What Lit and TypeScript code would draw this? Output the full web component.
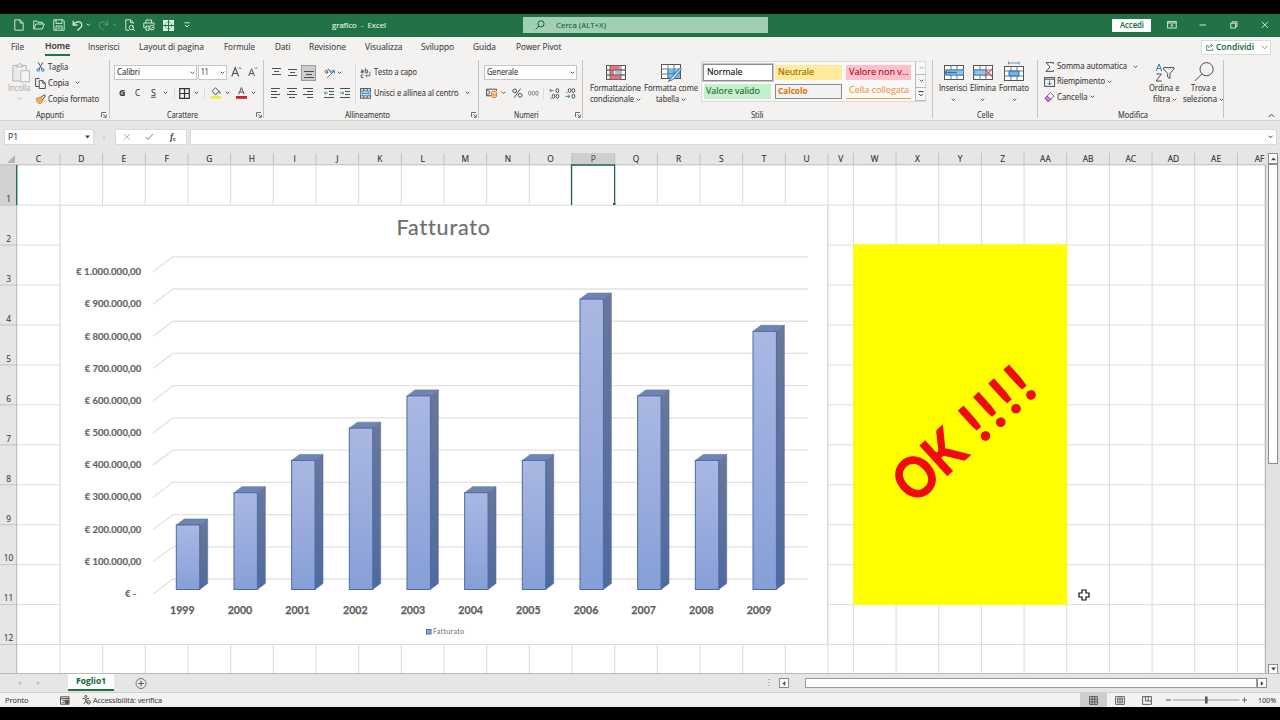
import { LitElement, html, svg, css } from "lit";
import { customElement } from "lit/decorators.js";

const COL_W = 42.67;
const COLUMNS = ["C","D","E","F","G","H","I","J","K","L","M","N","O","P","Q","R","S","T","U","V","W","X","Y","Z","AA","AB","AC","AD","AE","AF"];
const ROW_H = 39.95;
const DATA = [
  { year: 1999, value: 2 }, { year: 2000, value: 3 }, { year: 2001, value: 4 }, { year: 2002, value: 5 },
  { year: 2003, value: 6 }, { year: 2004, value: 3 }, { year: 2005, value: 4 }, { year: 2006, value: 9 },
  { year: 2007, value: 6 }, { year: 2008, value: 4 }, { year: 2009, value: 8 },
];

/* Label set to an exact width in px. */
const t = (s: string, w: number, size = 8.1, cls = "") => html`<svg class="t ${cls}" width=${w} height="11"><text x="0" y="7.8" font-size=${size} textLength=${w} lengthAdjust="spacingAndGlyphs">${s}</text></svg>`;
const ic = (w: number, h: number, body: unknown, cls = "") => html`<svg class="i ${cls}" width=${w} height=${h} viewBox="0 0 ${w} ${h}">${body}</svg>`;
const caret = (cls = "") => ic(5, 4, svg`<path d="M.7 .7 2.5 2.5 4.3 .7"/>`, "caret " + cls);
const launcher = ic(6, 6, svg`<path d="M.5 5V.5H5M2.2 2.2 5 5M5.3 2.6V5.3H2.6" stroke-width=".8"/>`);

const lines = (xs: number[][]) => svg`<path d=${xs.map(([x1, x2], i) => `M${x1} ${i * 3 + 0.5}H${x2}`).join("")} />`;
const hAlign = (xs: number[][]) => ic(11, 10, lines(xs));

const table3 = svg`<rect x=".5" y=".5" width="19" height="14" fill="#fff" stroke="#555"/><path d="M.5 5H19.5M.5 10H19.5M7 .5V14.5M13 .5V14.5" stroke="#777"/>`;

@customElement("x-chart")
export class XChart extends LitElement {
  static styles = css`
    :host { display: block; }
    svg { display: block; font-family: Lato, sans-serif; font-variant-ligatures: none; }
    .grid { stroke: #e2e2e2; fill: none; stroke-width: 1.3; }
    .val { fill: #666; font-weight: 700; font-size: 9.6px; stroke: #666; stroke-width: .2px; }
    .year { fill: #606060; font-weight: 700; font-size: 11.4px; stroke: #606060; stroke-width: .25px; }
    .title { fill: #707070; font-size: 21.5px; stroke: #707070; stroke-width: .25px; }
    .legend { fill: #6b6b6b; font-size: 7px; }
    .front { fill: url(#f); stroke: #4a6aa8; stroke-width: 1; }
    .side { fill: url(#s); stroke: #52699a; stroke-width: .5; }
    .top { fill: #7084b2; stroke: #5a76ab; stroke-width: .6; }
  `;
  render() {
    const step = 32.22;
    return html`<svg width="768" height="440" viewBox="60 205 768 440">
      <defs>
        <linearGradient id="f" x1="0" y1="0" x2="0" y2="1"><stop offset="0" stop-color="#a9b8e2"/><stop offset=".5" stop-color="#9aacdd"/><stop offset="1" stop-color="#869fd8"/></linearGradient>
        <linearGradient id="s" x1="0" y1="0" x2="0" y2="1"><stop offset="0" stop-color="#69779a"/><stop offset="1" stop-color="#506a9e"/></linearGradient>
      </defs>
      <rect x="60" y="205" width="768" height="440" fill="#fff"/>
      <path d="M59.5 205.2H827.5V644.6H60.2V205" fill="none" stroke="#dadada"/>
      <text class="title" x="396.5" y="235.3" textLength="93.5">Fatturato</text>
      ${Array.from({ length: 11 }, (_, k) => {
        const y = 579 - k * step;
        const label = k === 0 ? "€ -" : k === 10 ? "€ 1.000.000,00" : `€ ${k}00.000,00`;
        const w = k === 0 ? 11 : k === 10 ? 65 : 56.5;
        const right = k === 0 ? 136.3 : 141.2;
        return svg`<path class="grid" d="M153 ${y + 15}L173 ${y}H808"/>
          <text class="val" x=${right - w} y=${597 - k * 32.18} textLength=${w} lengthAdjust="spacingAndGlyphs">${label}</text>`;
      })}
      ${DATA.map((d, i) => {
        const x = 176.3 + i * 57.67;
        const y = 589.5 - d.value * 32.27;
        return svg`<path class="side" d="M${x + 23.4} ${y}l8 -6V583.5l-8 6Z"/>
          <path class="top" d="M${x} ${y}l8 -6h23.4l-8 6Z"/>
          <rect class="front" x=${x} y=${y} width="23.4" height=${589.5 - y}/>
          <text class="year" x=${170 + i * 57.67} y="613.7" textLength="24.6" lengthAdjust="spacingAndGlyphs">${d.year}</text>`;
      })}
      <rect x="426.5" y="629.5" width="4.5" height="4.5" fill="#8ea6d8" stroke="#4a6fb0"/>
      <text class="legend" x="433" y="633.8" textLength="31">Fatturato</text>
    </svg>`;
  }
}

@customElement("app-root")
export class AppRoot extends LitElement {
  static styles = css`
    :host { display: block; width: 1280px; height: 720px; background: #000; overflow: hidden; font-family: "Open Sans", "Noto Sans", sans-serif; color: #3b3b3b; }
    * { box-sizing: border-box; }
    .app { display: grid; grid-template-rows: 23px 20px 64px 32px 520px 19px 15px; width: 1280px; padding-top: 14px; }
    svg { display: block; overflow: visible; flex: none; }
    .t { fill: currentColor; stroke: none; }
    .t text { stroke: currentColor; stroke-width: .12px; }
    .i { fill: none; stroke: #505050; stroke-width: 1; }
    .caret { stroke: #555; }
    .bold { font-weight: 700; }
    .semi { font-weight: 600; }
    .calibri { font-family: "Open Sans", sans-serif; }
    .under { text-decoration: underline; }
    .muted { color: #b3b1af; }
    .muted-i { stroke: #b8b6b4; }
    .row { display: grid; align-items: center; }
    .off { opacity: .35; }

    .title { background: #217346; color: #e6f2ea; grid-template-columns: 19px 20px 19px 14px 12px 14px 13px 18px 20px 21px 148px 191px 589px 55px 32px 31px 31px 10px; padding-left: 14px; border-bottom: 1px solid #1d6a40; }
    .title .i { stroke: #cbe8d6; }
    .title .search { width: 245px; height: 16px; background: #a0cfb2; display: grid; grid-template-columns: 21px 1fr; align-items: center; padding-left: 12px; color: #1f5f3c; }
    .title .search .i { stroke: #1f5f3c; }
    .login { width: 39px; height: 13px; background: #fff; color: #217346; display: grid; place-items: center; }

    .tabs { background: #f3f2f1; grid-template-columns: 34px 43px 51px 85px 51px 34px 56px 56px 52px 43px 685px 1fr; padding-left: 11px; color: #444; }
    .home { border-bottom: 2px solid #217346; height: 18px; display: grid; align-content: center; width: 25px; color: #333; padding-top: 1px; }
    .share { width: 70px; height: 15px; border: 1px solid #d9d9d9; background: #fff; display: grid; grid-template-columns: 10px 45px 1fr; align-items: center; padding-left: 4px; color: #217346; }
    .share .t { color: #1f6b43; }

    .ribbon { background: #f3f2f1; display: flex; border-bottom: 1px solid #d5d3d1; }
    .sep { width: 1px; height: 58px; margin-top: 3px; background: #c6c4c2; }
    .group { display: grid; grid-template-rows: 52px 12px; }
    .cap { display: grid; grid-template-columns: 1fr 8px; align-items: center; justify-items: center; }
    .g1 { width: 109px; } .g2 { width: 153px; } .g3 { width: 214px; } .g4 { width: 103px; } .g5 { width: 349px; } .g6 { width: 104px; } .g7 { width: 185px; } .g8 { width: 56px; }
    .g1 .cap { padding-right: 1px; }
    .g5 .cap, .g6 .cap, .g7 .cap { grid-template-columns: 1fr; }
    .body2 { display: grid; grid-template-rows: 21px 20px; padding-top: 5px; }
    .clip { display: grid; grid-template-columns: 27px 1fr; padding-left: 8px; }
    .paste { display: grid; grid-template-rows: 21px 11px 9px; padding-top: 5px; align-items: center; }
    .paste .i { margin-left: 4px; } .paste .caret { margin-left: 9px; }
    .cliprows { display: grid; grid-template-rows: 16px 16px 16px; padding-top: 2px; }
    .cr { grid-template-columns: 13px 27px 1fr; }
    .fr1 { grid-template-columns: 84px 33px 17px 1fr; padding-left: 4px; }
    .fr2 { grid-template-columns: 16px 16px 12px 11px 5px 15px 10px 6px 15px 11px 15px 1fr; padding-left: 9px; }
    .combo { background: #fff; border: 1px solid #c8c6c4; height: 15px; display: flex; justify-content: space-between; align-items: center; padding: 0 1px 0 2px; color: #333; }
    .w83 { width: 83px; } .w29 { width: 29px; } .w93 { width: 93px; }
    .v { width: 1px; height: 12px; background: #dcdad8; }
    .al { display: grid; grid-template-columns: 91px 5px 1fr; }
    .vl { width: 1px; height: 40px; margin-top: 7px; background: #dcdad8; }
    .ar1 { grid-template-columns: 16px 14px 23px 13px 1fr; padding-left: 7px; }
    .ar2 { grid-template-columns: 16px 16px 21px 16px 1fr; padding-left: 7px; }
    .ar3 { grid-template-columns: 13.5px 91px 1fr; }
    .pressed { background: #cfcdcb; border: 1px solid #9c9a98; width: 15px; height: 16px; display: grid; place-items: center; }
    .nr1 { padding-left: 5px; } .nr2 { grid-template-columns: 15px 11px 16px 15px 6px 16px 1fr; padding-left: 7px; }

    .big { display: grid; grid-template-rows: 22px 11px 11px; justify-items: center; align-items: center; padding-top: 4px; }
    .ln { display: flex; align-items: center; gap: 2px; }
    .st { display: grid; grid-template-columns: 55px 56px 1fr; padding-left: 5px; }
    .gallery { margin: 4px 0 0 2px; width: 225px; height: 41px; border: 1px solid #dcdad8; display: grid; grid-template-columns: 213px 11px; background: #f8f8f7; }
    .cells { display: grid; grid-template-columns: 70px 67px 67px; column-gap: 2px; grid-template-rows: 20px 18px; align-items: center; padding-left: 1px; }
    .c { height: 15px; display: flex; align-items: center; padding-left: 3px; }
    .c3 { margin-left: 2px; }
    .normal { background: #fff; border: 1px solid #8f8d8b; outline: 1px solid #c9c7c5; height: 17px; color: #111; }
    .neutral { background: #ffeb9c; color: #9c6500; } .bad { background: #ffc0ca; color: #a01020; }
    .good { background: #c6efce; color: #1a6a26; width: 67px; margin-left: 1px; padding-left: 2px; }
    .calc { border: 1px solid #8a8a8a; background: #f2f2f2; color: #e07a14; padding-left: 2px; }
    .link { color: #ee9c4c; border-bottom: 1.5px solid #f0a050; }
    .scr { display: grid; grid-template-rows: 13px 13px 13px; }
    .scr div { border: 1px solid #bdbbb9; border-right-width: 0; border-top-width: 0; display: grid; place-items: center; }
    .ce { display: grid; grid-template-columns: 31px 27px 36px; padding-left: 5px; }
    .mo { display: grid; grid-template-columns: 102px 37px 1fr; padding-left: 6px; }
    .mo .big:last-child { padding-right: 4px; }
    .morows { display: grid; grid-template-rows: 15.3px 15.3px 15.3px; padding-top: 2px; }
    .mr { grid-template-columns: 13px 1fr; }
    .wide { gap: 6px; }
    .g8 .i { align-self: end; margin: 0 0 2px 44px; }
    .g8 { align-items: end; grid-template-rows: 1fr; }

    .fbar { background: #e6e6e6; display: grid; grid-template-columns: 99px 12px 75px 1fr; padding: 8px 3px 0 4px; align-items: start; }
    .fb { background: #fff; height: 16px; border: 1px solid #dadada; display: flex; align-items: center; justify-content: space-between; padding: 0 3px 0 3px; color: #444; }
    .name { width: 90px; } .tools { width: 72px; padding: 0 6px 0 7px; } .formula { justify-content: flex-end; }
    .dots { height: 16px; display: grid; place-items: center start; }
    .dots .i { stroke: #aaa; }

    .sheet { display: grid; grid-template-columns: 1266px 14px; background: #e6e6e6; }
    .main { position: relative; display: block; height: 520px; }
    .main .surface { display: block; font-family: "Open Sans", sans-serif; }
    .chart { position: absolute; left: 60px; top: 52px; }
    .ok { position: absolute; left: 853px; top: 91px; }
    .cursor { position: absolute; left: 1078px; top: 436px; }
    .vs { display: grid; grid-template-rows: 11px 300px 200px 10px; padding: 0 2px 0 2px; background: #e1e1e1; }
    .btn { background: #fff; border: 1px solid #8c8c8c; display: grid; place-items: center; }
    .tri { fill: #444; stroke: none; }

    .foot { background: #e6e6e6; border-top: 1px solid #b9b9b9; display: grid; grid-template-columns: 18px 33px 68px 633px 10px 10px 16px 452px 10px; padding-left: 17px; align-items: center; }
    .sheettab { width: 46px; height: 17px; background: #fff; border-bottom: 2px solid #217346; display: grid; place-items: center; align-self: start; color: #1b6a40; }
    .hb { height: 10px; } .thumb { height: 10px; background: #fff; border: 1px solid #9a9a9a; }
    .status { background: #f3f2f1; border-top: 1px solid #d0d0d0; grid-template-columns: 55px 22px 11px 987px 35px 27px 24px 8px 68px 16px 1fr; padding-left: 5px; padding-bottom: 1px; color: #444; }
    .view { width: 27px; height: 14px; background: #cfcecd; display: grid; place-items: center; }
  `;

  private surface() {
    const xs: number[] = [17];
    COLUMNS.forEach((c, i) => {
      const x = i < 19 ? 59.9 + i * COL_W : 853.4 + (i - 19) * COL_W;
      xs.push(Math.min(x, 1265));
    });
    const bounds = xs.slice(1, -1);
    return html`<svg class="surface" width="1266" height="520" viewBox="0 153 1266 520">
      <rect x="0" y="153" width="1266" height="12" fill="#e6e6e6"/>
      <rect x="17" y="165" width="1248" height="508" fill="#fff"/>
      <rect x="0" y="165" width="17" height="508" fill="#e6e6e6"/>
      <rect x="0" y="165" width="17" height="40" fill="#d2d2d2"/>
      <rect x="571.6" y="153" width="43" height="12" fill="#cfcfcf"/>
      <path d="M15 155V163H7Z" fill="#b4b4b4"/>
      <path d="M0 164.8H1265" stroke="#bdbdbd"/>
      ${bounds.map((x) => svg`<path d="M${x} 153V165" stroke="#c0c0c0"/><path d="M${x} 165V673" stroke="#dadada"/>`)}
      ${Array.from({ length: 12 }, (_, i) => {
        const y = 205.1 + i * ROW_H;
        return svg`<path d="M17 ${y}H1265" stroke="#dedede"/><path d="M0 ${y}H17" stroke="#c4c4c4"/>
          <text x="8.5" y=${y - 3.2} font-size="8.3" text-anchor="middle" fill="#3c3c3c" stroke="#3c3c3c" stroke-width=".12">${i + 1}</text>`;
      })}
      ${COLUMNS.map((c, i) => svg`<text x=${c === "AF" ? 1259.5 : (xs[i] + xs[i + 1]) / 2} y="161.6" font-size="8.4" text-anchor="middle" stroke="#333" stroke-width=".15" fill=${c === "P" ? "#5f6f66" : "#333"}>${c}</text>`)}
      <path d="M16.7 165V673" stroke="#b5b5b5"/><path d="M16.7 165V205" stroke="#217346" stroke-width="1.4"/>
      <path d="M1265.3 165V673" stroke="#a8a8a8"/>
      <path d="M571.5 205V165H614.6V203" fill="none" stroke="#1f6b43" stroke-width="1.3"/>
      <rect x="613" y="203" width="2.6" height="2.4" fill="#1f6b43"/>
    </svg>`;
  }

  render() {
    return html`<div class="app">
      <div class="row title">
        ${ic(10, 12, svg`<path d="M.8 .8H6L9.2 4V11.2H.8ZM6 .8V4H9.2"/>`)}
        ${ic(12, 10, svg`<path d="M.7 9V1H4L5 2.3H9.3V4M.7 9 3 4H11.3L9.3 9Z"/>`)}
        ${ic(12, 12, svg`<path d="M.8 .8H10L11.2 2V11.2H.8ZM3 .8V4.4H9V.8M3 11V7H9V11M4.5 9H7.5"/>`)}
        ${ic(11, 11, svg`<path d="M1.2 .8V5H5.4M1.2 5C4 .6 9.8 1.2 9.8 5.2 9.8 7.4 8 8.4 5.4 10.4" stroke-width="1.3"/>`)}
        ${caret()}
        ${ic(11, 11, svg`<path d="M9.8 .8V5H5.6M9.8 5C7 .6 1.2 1.2 1.2 5.2 1.2 7.4 3 8.4 5.6 10.4"/>`, "off")}
        ${caret("off")}
        ${ic(11, 12, svg`<path d="M4 11.2H.8V.8H5.5L8.2 3.5V5M5.5 .8V3.5H8M7.7 8.5V6.2"/><circle cx="6.4" cy="8.6" r="2.2"/><path d="M8 10.2 9.8 11.6"/>`)}
        ${ic(12, 12, svg`<path d="M3 4V1H8.6V4M3.4 8.6H.8V4H11V6M3 11.2V7H6V11.2Z"/><circle cx="8.8" cy="8.6" r="2.4"/><path d="m7.7 8.6.9.9 1.4-1.6"/>`)}
        ${ic(11, 11, svg`<path d="M0 0H5V5H0ZM6 0H11V5H6ZM0 6H5V11H0ZM6 6H11V11H6Z" fill="#d9efe1" stroke="none"/><path d="M2.5 3.5V7.5M8.5 3.5V7.5M3.5 2.5H7.5M3.5 8.5H7.5" stroke="#217346" stroke-width=".6"/>`)}
        ${ic(6, 6, svg`<path d="M.5 .8H5.5M1 3 3 5 5 3"/>`)}
        ${t("grafico \u00a0- \u00a0Excel", 54, 8)}
        <div class="search">${ic(10, 10, svg`<circle cx="6" cy="3.8" r="3.1"/><path d="M3.8 6.2.6 9.4"/>`)}${t("Cerca (ALT+X)", 50, 8)}</div>
        <div class="login">${t("Accedi", 24, 8, "semi")}</div>
        ${ic(10, 8, svg`<rect x=".6" y=".6" width="8.6" height="6.4"/><path d="M.6 2H9.2M4.9 6.3V3.4M3.5 4.7 4.9 3.3 6.3 4.7"/>`)}
        ${ic(8, 8, svg`<path d="M.5 4H7"/>`)}
        ${ic(8, 8, svg`<rect x=".8" y="2.2" width="4.8" height="4.8"/><path d="M2.2 2V.8H7V5.6H5.8"/>`)}
        ${ic(8, 8, svg`<path d="M.7 .7 7 7M7 .7.7 7"/>`)}
      </div>

      <div class="row tabs">
        ${t("File", 13, 8.6)}<div class="home">${t("Home", 25, 8.6, "semi")}</div>${t("Inserisci", 31.5, 8.6)}${t("Layout di pagina", 65, 8.6)}${t("Formule", 31, 8.6)}${t("Dati", 15.5, 8.6)}${t("Revisione", 37, 8.6)}${t("Visualizza", 37.5, 8.6)}${t("Sviluppo", 33, 8.6)}${t("Guida", 23, 8.6)}${t("Power Pivot", 45.5, 8.6)}
        <div class="share">${ic(8, 8, svg`<path d="M2.5 2.6H.7V7.4H6.7V5.6M2.6 5C2.8 3 4 2.4 5.8 2.4M4.6 .6 6.8 2.4 4.6 4.2" stroke="#4f8067" stroke-width=".9"/>`)}${t("Condividi", 38, 8.6, "semi")}${ic(7, 5, svg`<path d="M.6 .8 3.5 3.8 6.4 .8" stroke="#777" stroke-width=".8"/>`)}</div>
      </div>

      <div class="ribbon">
        <div class="group g1">
          <div class="clip">
            <div class="paste">${ic(18, 20, svg`<path d="M5 2.5H.8V18H8M11 2.5H14.2V7M4.5 4V2H6.4C6.4-.1 9.2-.1 9.2 2H11V4Z" fill="#e9e8e7"/><rect x="8.8" y="7.8" width="8.6" height="11" fill="#f5f5f5"/>`, "muted-i")}${t("Incolla", 22.5, 8.1, "muted")}${caret("muted-i")}</div>
            <div class="cliprows">
              <div class="row cr">${ic(11, 10, svg`<path d="M3.2 .4 7 7M7.8 .4 4 7"/><circle cx="3.2" cy="8" r="1.3" stroke="#2f7ab8"/><circle cx="7.8" cy="8" r="1.3" stroke="#2f7ab8"/>`)}${t("Taglia", 20, 8.1)}</div>
              <div class="row cr">${ic(11, 11, svg`<path d="M4 8.5H.6V.6H4.6M4.2 2.6H7.7L10.3 5.2V10.5H4.2ZM7.7 2.6V5.2H10.3"/>`)}${t("Copia", 21, 8.1)}${caret()}</div>
              <div class="row cr">${ic(11, 11, svg`<path d="M1 4.6 5.4 3 8.2 6.4 5.4 10 2.6 8.6Z" fill="#f0b35a" stroke="#d98f2b"/><path d="M5.6 3.4 9.6 .8 10.4 1.8 7.8 5.6"/>`)}${t("Copia formato", 51, 8.1)}</div>
            </div>
          </div>
          <div class="cap">${t("Appunti", 28)}${launcher}</div>
        </div>
        <div class="sep"></div>

        <div class="group g2">
          <div class="body2">
            <div class="row fr1">
              <div class="combo w83">${t("Calibri", 23, 8.1)}${caret()}</div>
              <div class="combo w29">${t("11", 7.5, 8.1)}${caret()}</div>
              ${ic(11, 12, svg`<path d="M.8 9.5 4.2 .6 7.6 9.5M2 6.5H6.4" stroke-width="1.1"/><path d="M7.6 2 8.9 .6 10.2 2" stroke="#2f7ab8"/>`)}
              ${ic(10, 11, svg`<path d="M.6 9 3.6 1.8 6.6 9M1.8 6.6H5.4"/><path d="M7 .6 8.1 1.8 9.2 .6" stroke="#2f7ab8"/>`)}
            </div>
            <div class="row fr2">
              ${t("G", 6.4, 8.8, "bold")}${t("C", 5.2, 8.8)}${t("S", 4.8, 8.8, "under")}${caret()}
              <div class="v"></div>
              ${ic(11, 11, svg`<path d="M.7 .7H10.3V10.3H.7ZM.7 5.5H10.3M5.5 .7V10.3" stroke="#333" stroke-width="1.2"/>`)}${caret()}
              <div class="v"></div>
              ${ic(12, 12, svg`<path d="M2 4.2 5.6 .8 9 4.4 5.4 7.8ZM9.4 4.2 10.2 6.8"/><rect x=".4" y="9" width="10.6" height="2.8" fill="#ecf03a" stroke="none"/>`)}${caret()}
              ${ic(11, 12, svg`<path d="M2.6 7.2 5.4 .6 8.2 7.2M3.6 5H7.2"/><rect x="0" y="9" width="11" height="2.8" fill="#d3202a" stroke="none"/>`)}${caret()}
            </div>
          </div>
          <div class="cap">${t("Carattere", 31)}${launcher}</div>
        </div>
        <div class="sep"></div>

        <div class="group g3">
          <div class="al">
            <div class="body2">
              <div class="row ar1">
                ${ic(10, 10, svg`<path d="M1 .5H10M3 3.5H8M1 6.5H10"/>`)}
                ${ic(10, 10, svg`<path d="M1 1.5H10M3 4.5H8M1 7.5H10"/>`)}
                <div class="pressed">${ic(10, 10, svg`<path d="M0 3.5H10M2 6.5H8M0 9.5H10"/>`)}</div>
                ${ic(11, 10, svg`<path d="M3 10 10 3M7.5 2.6H10.4V5.6" stroke="#3c84bb"/><path d="M1 3.4 2.6 2 4 4.2 2.4 5.4ZM4.2 .6 7 4.6 8.2 3.2"/>`)}
                ${caret()}
              </div>
              <div class="row ar2">
                ${hAlign([[0, 9], [0, 6], [0, 9], [0, 6]])}${hAlign([[0, 10], [2, 8], [0, 10], [2, 8]])}${hAlign([[0, 10], [4, 10], [0, 10], [4, 10]])}
                ${ic(11, 10, svg`<path d="M0 .5H10M5 3.5H10M5 6.5H10M0 9.5H10"/><path d="M4 5H.4M1.8 3.6.4 5 1.8 6.4" stroke="#3c84bb"/>`)}
                ${ic(11, 10, svg`<path d="M0 .5H10M5 3.5H10M5 6.5H10M0 9.5H10"/><path d="M0 5H3.8M2.4 3.6 3.8 5 2.4 6.4" stroke="#3c84bb"/>`)}
              </div>
            </div>
            <div class="vl"></div>
            <div class="body2">
              <div class="row ar3">${ic(11, 10, svg`<path d="M1 2.2H3.2V4.8H1.2Q.4 4.1 1.2 3.5H3.2M5.4 .2V4.8H7.6V2.2H5.4M3.4 7H1.2V9.6H3.4" stroke-width=".9"/><path d="M9.8 3.6V7.8H5.6M7 6.4 5.6 7.8 7 9.2" stroke="#3c84bb"/>`)}${t("Testo a capo", 43)}</div>
              <div class="row ar3">${ic(11, 11, svg`<rect x=".6" y=".6" width="9.8" height="9.6"/><path d="M3.8 .6V3M7.2 .6V3M3.8 8V10M7.2 8V10"/><rect x=".6" y="3" width="9.8" height="4.8" fill="#cfe5f5" stroke="#3c84bb"/><path d="M2 5.4H9M3.2 4.3 2 5.4 3.2 6.5M7.8 4.3 9 5.4 7.8 6.5" stroke="#2a6ea6" stroke-width=".8"/>`)}${t("Unisci e allinea al centro", 84.5)}${caret()}</div>
            </div>
          </div>
          <div class="cap">${t("Allineamento", 45)}${launcher}</div>
        </div>
        <div class="sep"></div>

        <div class="group g4">
          <div class="body2">
            <div class="row nr1"><div class="combo w93">${t("Generale", 31)}${caret()}</div></div>
            <div class="row nr2">
              ${ic(12, 10, svg`<path d="M.6 1.2H10.4V3M5 7.8H.6V1.2M1 1.6 4 4.4 1 7.4"/><path d="M5.6 4.2C5.6 3 10.6 3 10.6 4.2V8.6C10.6 9.8 5.6 9.8 5.6 8.6ZM5.6 6.3C6 7.2 10.2 7.2 10.6 6.3" fill="#f7d3a6" stroke="#d9812a"/>`)}
              ${caret()}
              ${ic(11, 10, svg`<circle cx="2.7" cy="2.9" r="1.9"/><circle cx="8.2" cy="7.3" r="1.9"/><path d="M8.6 .6 2.2 9.6"/>`)}
              ${ic(11, 7, svg`<g stroke-width=".8" stroke="#777"><ellipse cx="1.8" cy="3.2" rx="1.3" ry="2.1"/><ellipse cx="5.4" cy="3.2" rx="1.3" ry="2.1"/><ellipse cx="9" cy="3.2" rx="1.3" ry="2.1"/></g>`)}
              <div class="v"></div>
              ${ic(11, 11, svg`<path d="M4.6 2.6H.8M2.2 1 .8 2.6 2.2 4.2" stroke="#3c84bb"/><ellipse cx="8.4" cy="2.5" rx="1.4" ry="2"/><ellipse cx="4.4" cy="8.3" rx="1.3" ry="2"/><ellipse cx="8.4" cy="8.3" rx="1.4" ry="2"/><path d="M1.4 10.4h1"/>`)}
              ${ic(11, 11, svg`<path d="M.6 8.4H4.6M3.2 6.8 4.6 8.4 3.2 10" stroke="#3c84bb"/><ellipse cx="8.4" cy="2.5" rx="1.4" ry="2"/><ellipse cx="4.6" cy="2.5" rx="1.3" ry="2"/><ellipse cx="8.4" cy="8.3" rx="1.4" ry="2"/><path d="M1.4 4.4h1"/>`)}
            </div>
          </div>
          <div class="cap">${t("Numeri", 24.5)}${launcher}</div>
        </div>
        <div class="sep"></div>

        <div class="group g5">
          <div class="st">
            <div class="big">${ic(20, 15, svg`${table3}<path d="M4 .8H13V5H4ZM4 10H15V14.2H4Z" fill="#f0707c" stroke="none"/><path d="M4 5.4H8V9.6H4Z" fill="#f0707c" stroke="none"/><path d="M9 5.4H14V9.6H9Z" fill="#9cc4ea" stroke="none"/><path d="M.5 5H19.5M.5 10H19.5M4 .5V14.5M15 .5V14.5" stroke="#555" stroke-width=".8"/>`)}${t("Formattazione", 51)}<div class="ln">${t("condizionale", 44)}${caret()}</div></div>
            <div class="big">${ic(20, 17, svg`${table3}<path d="M7 5H19V14H7Z" fill="#7dbbe8" stroke="none"/><path d="M7 5V14M13 5V14M7 9.6H19" stroke="#3c84bb"/><path d="M19.4 4 10.6 13.4 7.4 17.4 12.4 15.4 20.4 5.4Z" fill="#d7e9f7" stroke="#356f9f"/>`)}${t("Formatta come", 54)}<div class="ln">${t("tabella", 23)}${caret()}</div></div>
            <div class="gallery">
              <div class="cells">
                <div class="c normal">${t("Normale", 35.5, 8.5, "calibri")}</div><div class="c neutral">${t("Neutrale", 36, 8.5, "calibri")}</div><div class="c bad c3">${t("Valore non v...", 60, 8.5, "calibri")}</div>
                <div class="c good">${t("Valore valido", 54, 8.5, "calibri")}</div><div class="c calc">${t("Calcolo", 29.5, 8.5, "calibri bold")}</div><div class="c link c3">${t("Cella collegata", 60, 8.5, "calibri")}</div>
              </div>
              <div class="scr"><div>${ic(5, 4, svg`<path d="M.7 2.8 2.5 .9 4.3 2.8" stroke="#aaa"/>`)}</div><div>${caret()}</div><div>${ic(6, 6, svg`<path d="M.5 .6H5.5M1 2.8 3 4.8 5 2.8" stroke="#333"/>`)}</div></div>
            </div>
          </div>
          <div class="cap">${t("Stili", 12.5)}</div>
        </div>
        <div class="sep"></div>

        <div class="group g6">
          <div class="ce">
            <div class="big">${ic(20, 15, svg`${table3}<path d="M5 5H19.5V10H5Z" fill="#8cc4ec" stroke="#3c84bb"/><path d="M13 7.5H1M4 4.6 1 7.5 4 10.4" stroke="#2476b4" stroke-width="1.3"/>`)}${t("Inserisci", 28.5)}${caret()}</div>
            <div class="big">${ic(20, 15, svg`${table3}<path d="M1 5H13V10H1Z" fill="#8cc4ec" stroke="#3c84bb"/><path d="M12 4 19 11.6M19 4 12 11.6" stroke="#d9484f" stroke-width="1.1"/>`)}${t("Elimina", 26)}${caret()}</div>
            <div class="big">${ic(20, 21, svg`<g transform="translate(0 4)">${table3}<path d="M5 5H15V10H5Z" fill="#6fb2e4" stroke="#2476b4"/></g><path d="M4.5 1H15M4.5-.6V2.4M15-.6V2.4" stroke="#3c84bb" stroke-width=".8"/>`)}${t("Formato", 30)}${caret()}</div>
          </div>
          <div class="cap">${t("Celle", 16.5)}</div>
        </div>
        <div class="sep"></div>

        <div class="group g7">
          <div class="mo">
            <div class="morows">
              <div class="row mr">${ic(10, 10, svg`<path d="M9.4 2V.6H2L6 5 2 9.4H9.4V8"/>`)}<div class="ln wide">${t("Somma automatica", 70)}${caret()}</div></div>
              <div class="row mr">${ic(11, 10, svg`<rect x=".6" y=".6" width="10" height="8.8"/><path d="M.6 2.2H10.6"/><path d="M5.6 3.6V8M3.8 6.2 5.6 8 7.4 6.2" stroke="#2f7ab8"/>`)}<div class="ln">${t("Riempimento", 48)}${caret()}</div></div>
              <div class="row mr">${ic(11, 10, svg`<path d="M1 6 6.4 .8 10 4 4.8 9.4H3.6Z" fill="#fff" stroke="#8b5a9c"/><path d="M1 6 3 4 7 7.2 4.8 9.4H3.6Z" fill="#c583d3" stroke="#8b5a9c"/>`)}<div class="ln">${t("Cancella", 30.5)}${caret()}</div></div>
            </div>
            <div class="big">${ic(20, 19, svg`<path d="M1.2 8 4 1 6.8 8M2.2 5.6H5.8" stroke="#2f7ab8"/><path d="M1.4 11H6.4L1.2 18H6.8"/><path d="M8.6 4.6H19V6L15 10.4V15.6L12.6 14V10.4L8.6 6Z"/>`)}${t("Ordina e", 30.5)}<div class="ln">${t("filtra", 17)}${caret()}</div></div>
            <div class="big">${ic(20, 20, svg`<circle cx="12.6" cy="7.2" r="6.6"/><path d="M7.8 12 .8 19"/>`)}${t("Trova e", 25)}<div class="ln">${t("seleziona", 34)}${caret()}</div></div>
          </div>
          <div class="cap">${t("Modifica", 30)}</div>
        </div>
        <div class="sep"></div>
        <div class="group g8">${ic(7, 5, svg`<path d="M.7 4 3.5 1.2 6.3 4"/>`)}</div>
      </div>

      <div class="fbar">
        <div class="fb name">${t("P1", 10, 8.1)}${ic(5, 4, svg`<path d="M0 .5H5L2.5 3.5Z" class="tri"/>`)}</div>
        <div class="dots">${ic(2, 8, svg`<path d="M1 0V8" stroke-dasharray="1 2"/>`)}</div>
        <div class="fb tools">
          ${ic(8, 8, svg`<path d="M1 1 7 6.6M7 1 1 6.6" stroke="#b5b5b5"/>`)}
          ${ic(9, 8, svg`<path d="M.8 4 3.2 6.4 8 .8" stroke="#a8a8a8" stroke-width="1.2"/>`)}
          ${ic(12, 9, svg`<text x="2" y="7" font-size="9.5" font-style="italic" font-weight="700" font-family="Liberation Serif" fill="#444" stroke="none">f<tspan dx="-.6" dy="1" font-size="6.5">x</tspan></text>`)}
        </div>
        <div class="fb formula">${ic(5, 4, svg`<path d="M.6 .8 2.5 2.8 4.4 .8" stroke="#333"/>`)}</div>
      </div>

      <div class="sheet">
        <div class="main">
          ${this.surface()}
          <x-chart class="chart"></x-chart>
          <svg class="ok" width="214" height="361" viewBox="853 244 214 361">
            <rect x="853.3" y="244.4" width="213.8" height="360.4" fill="#ff0"/>
            <g transform="translate(914 505.5) rotate(-42)" font-family="Lato, sans-serif" font-weight="700" font-size="56" fill="#f00a0a" stroke="#f00a0a" stroke-width="1.2">
              <text x="0" y="0" textLength="75" lengthAdjust="spacingAndGlyphs">OK</text>
              <text x="92 112.4 132.8 153.2" y="0">!!!!</text>
            </g>
          </svg>
          <svg class="cursor" width="12" height="12"><path d="M4 1H8V4H11V8H8V11H4V8H1V4H4Z" fill="#fff" stroke="#111" stroke-width="1.2"/></svg>
        </div>
        <div class="vs">
          <div class="btn">${ic(5, 4, svg`<path d="M0 3.2 2.5 .5 5 3.2Z" class="tri"/>`)}</div>
          <div class="btn"></div><div></div>
          <div class="btn">${ic(5, 4, svg`<path d="M0 .6H5L2.5 3.4Z" class="tri"/>`)}</div>
        </div>
      </div>

      <div class="foot">
        ${ic(5, 6, svg`<path d="M4 1 1 3 4 5Z" fill="#bbb" stroke="none"/>`)}
        ${ic(6, 6, svg`<path d="M2 1 5 3 2 5Z" fill="#bbb" stroke="none"/>`)}
        <div class="sheettab">${t("Foglio1", 30, 8.6, "bold")}</div>
        ${ic(11, 11, svg`<circle cx="5" cy="5.5" r="5" stroke="#777"/><path d="M2.3 5.5H7.7M5 2.8V8.2" stroke="#555"/>`)}
        ${ic(2, 8, svg`<path d="M0 0V8" stroke="#888" stroke-dasharray="1 2"/>`)}
        <div class="btn hb">${ic(4, 5, svg`<path d="M3.2 0V5L.6 2.5Z" class="tri"/>`)}</div>
        <div></div>
        <div class="thumb"></div>
        <div class="btn hb">${ic(4, 5, svg`<path d="M.8 0V5L3.4 2.5Z" class="tri"/>`)}</div>
      </div>

      <div class="row status">
        ${t("Pronto", 23.5, 7.6)}
        ${ic(10, 9, svg`<path d="M.6 .8H9V8.2H.6ZM.6 2.6H9M2.4 4.4H5M2.4 6.4H4"/><circle cx="6.8" cy="5.8" r="1.9" fill="#555"/>`)}
        ${ic(10, 10, svg`<circle cx="3.8" cy="1.4" r="1"/><path d="M.6 3.2 3.8 4.2 7.2 3.2M3.8 4.2V6L1.8 9.2M3.8 6 5 7.6"/><circle cx="6.6" cy="7.2" r="1.8"/><path d="m5.6 7.2.8.8 1.2-1.4" stroke-width=".7"/>`)}
        ${t("Accessibilità: verifica", 69, 7.6)}
        <div class="view">${ic(9, 9, svg`<path d="M.6 .6H8.4V8.4H.6ZM.6 3.2H8.4M.6 5.8H8.4M3.2 .6V8.4M5.8 .6V8.4" stroke-width=".9"/>`)}</div>
        ${ic(10, 9, svg`<path d="M.6 .6H9.4V8.4H.6ZM2.6 2.2H7.4V6.8H2.6ZM3.6 3.8H6.4M3.6 5.2H6.4" stroke-width=".9"/>`)}
        ${ic(10, 9, svg`<path d="M.6 .6H9.4V8.4H.6ZM3.4 .6V5H9.4M6.2 .6V5" stroke-width=".9"/>`)}
        ${ic(6, 6, svg`<path d="M0 3H5"/>`)}
        ${ic(66, 8, svg`<path d="M-1 4H65.5" stroke="#999"/><rect x="31" y="0.5" width="2.6" height="7" fill="#555" stroke="none"/>`)}
        ${ic(6, 6, svg`<path d="M0 3H5M2.5 .5V5.5" stroke="#666"/>`)}
        ${t("100%", 18, 7.6)}
      </div>
    </div>`;
  }
}
